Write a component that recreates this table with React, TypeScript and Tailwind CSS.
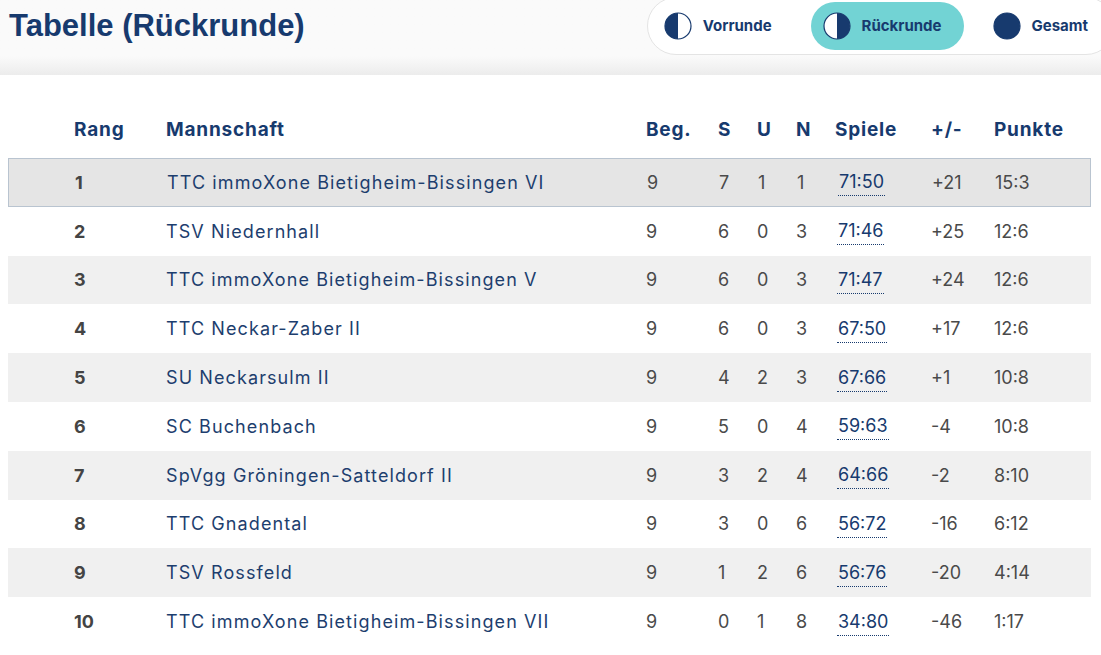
import React from 'react';

type Row = {
  rang: number;
  team: string;
  beg: number;
  s: number;
  u: number;
  n: number;
  spiele: string;
  diff: string;
  punkte: string;
};

const rows: Row[] = [
  { rang: 1, team: 'TTC immoXone Bietigheim-Bissingen VI', beg: 9, s: 7, u: 1, n: 1, spiele: '71:50', diff: '+21', punkte: '15:3' },
  { rang: 2, team: 'TSV Niedernhall', beg: 9, s: 6, u: 0, n: 3, spiele: '71:46', diff: '+25', punkte: '12:6' },
  { rang: 3, team: 'TTC immoXone Bietigheim-Bissingen V', beg: 9, s: 6, u: 0, n: 3, spiele: '71:47', diff: '+24', punkte: '12:6' },
  { rang: 4, team: 'TTC Neckar-Zaber II', beg: 9, s: 6, u: 0, n: 3, spiele: '67:50', diff: '+17', punkte: '12:6' },
  { rang: 5, team: 'SU Neckarsulm II', beg: 9, s: 4, u: 2, n: 3, spiele: '67:66', diff: '+1', punkte: '10:8' },
  { rang: 6, team: 'SC Buchenbach', beg: 9, s: 5, u: 0, n: 4, spiele: '59:63', diff: '-4', punkte: '10:8' },
  { rang: 7, team: 'SpVgg Gröningen-Satteldorf II', beg: 9, s: 3, u: 2, n: 4, spiele: '64:66', diff: '-2', punkte: '8:10' },
  { rang: 8, team: 'TTC Gnadental', beg: 9, s: 3, u: 0, n: 6, spiele: '56:72', diff: '-16', punkte: '6:12' },
  { rang: 9, team: 'TSV Rossfeld', beg: 9, s: 1, u: 2, n: 6, spiele: '56:76', diff: '-20', punkte: '4:14' },
  { rang: 10, team: 'TTC immoXone Bietigheim-Bissingen VII', beg: 9, s: 0, u: 1, n: 8, spiele: '34:80', diff: '-46', punkte: '1:17' },
];

const cols = 'grid grid-cols-[92px_480px_72px_39px_39px_39px_96px_63px_1fr] items-center pl-[66px]';

// half / full circle icons for the round switcher
const RoundIcon: React.FC<{ kind: 'first' | 'second' | 'all' }> = ({ kind }) => (
  <svg width="28" height="28" viewBox="0 0 28 28" className="shrink-0">
    <circle cx="14" cy="14" r="13" fill={kind === 'all' ? '#173a6e' : '#ffffff'} stroke="#173a6e" strokeWidth="1.2" />
    {kind === 'first' && <path d="M14 1 A13 13 0 0 0 14 27 Z" fill="#173a6e" />}
    {kind === 'second' && <path d="M14 1 A13 13 0 0 1 14 27 Z" fill="#173a6e" />}
  </svg>
);

const App: React.FC = () => {
  return (
    <div className="w-[1101px] h-[655px] overflow-hidden bg-white font-['Inter',sans-serif]">
      <div className="h-[75px] bg-linear-to-b from-[#fafafa] from-75% to-[#ececec] flex items-start justify-between">
        <h1 className="ml-[9px] mt-[7px] text-[31px] leading-[37px] font-bold text-[#173a6e] font-['Liberation_Sans',Arial,sans-serif]">
          Tabelle (Rückrunde)
        </h1>
        <div className="mt-[-3px] mr-[-14px] flex items-center gap-[17px] rounded-full border border-[#e4e4e4] bg-white p-[4px]">
          <div className="flex h-[48px] items-center gap-[11px] rounded-full pl-3 pr-[22px]">
            <RoundIcon kind="first" />
            <span className="text-[15px] font-bold text-[#173a6e]">Vorrunde</span>
          </div>
          <div className="flex h-[48px] items-center gap-[11px] rounded-full bg-[#72d3d4] pl-3 pr-[22px]">
            <RoundIcon kind="second" />
            <span className="text-[15px] font-bold text-[#173a6e]">Rückrunde</span>
          </div>
          <div className="flex h-[48px] items-center gap-[11px] rounded-full pl-3 pr-[22px]">
            <RoundIcon kind="all" />
            <span className="text-[15px] font-bold text-[#173a6e]">Gesamt</span>
          </div>
        </div>
      </div>

      <div className="mt-[28px] ml-[8px] w-[1083px]">
        <div className={`${cols} h-[55px] text-[19px] font-bold tracking-[0.8px] text-[#173a6e]`}>
          <span>Rang</span>
          <span>Mannschaft</span>
          <span>Beg.</span>
          <span>S</span>
          <span>U</span>
          <span>N</span>
          <span>Spiele</span>
          <span>+/-</span>
          <span>Punkte</span>
        </div>
        {rows.map((r, i) => (
          <div
            key={r.rang}
            className={`${cols} h-[48.8px] text-[18px] text-[#4a4a4a] ${
              i === 0 ? 'bg-[#e5e5e5] border border-[#b9c4d0]' : i % 2 === 0 ? 'bg-[#f0f0f0]' : 'bg-white'
            }`}
          >
            <span className="font-bold text-[#444444]">{r.rang}</span>
            <span className="tracking-[1.1px] text-[#1d3e6e]">{r.team}</span>
            <span>{r.beg}</span>
            <span>{r.s}</span>
            <span>{r.u}</span>
            <span>{r.n}</span>
            <span>
              <span className="ml-[2px] inline-block border-b border-dotted border-[#173a6e] px-[1px] pt-[2px] pb-[1px] leading-[24px] text-[#173a6e]">
                {r.spiele}
              </span>
            </span>
            <span>{r.diff}</span>
            <span>{r.punkte}</span>
          </div>
        ))}
      </div>
    </div>
  );
};

export default App;
